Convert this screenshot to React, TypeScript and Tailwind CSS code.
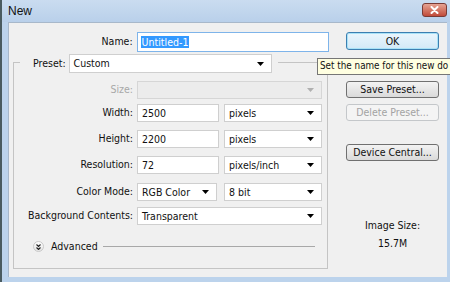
import React from "react";

const Arrow = ({ disabled }: { disabled?: boolean }) => (
  <svg width="7" height="4" viewBox="0 0 7 4" className="shrink-0">
    <path d="M0 0h7L3.5 4z" fill={disabled ? "#b0b0b0" : "#000"} />
  </svg>
);

const Select = ({ w, value, disabled }: { w: string; value?: string; disabled?: boolean }) => (
  <div
    className={`${w} h-[18px] flex items-center justify-between pl-[4px] pr-[7px] border ${
      disabled ? "bg-[#ececec] border-[#d6d6d6]" : "bg-white border-[#cfcfcf]"
    }`}
  >
    <span className="leading-none">{value}</span>
    <Arrow disabled={disabled} />
  </div>
);

const Input = ({ w, value }: { w: string; value: string }) => (
  <div className={`${w} h-[18px] flex items-center pl-[4px] bg-white border border-[#cfcfcf]`}>
    <span className="leading-none">{value}</span>
  </div>
);

const Btn = ({ label, disabled, def, h = "h-[17px]" }: { label: string; disabled?: boolean; def?: boolean; h?: string }) => (
  <div
    className={`w-[93px] ${h} flex items-center justify-center rounded-[3px] border ${
      disabled
        ? "border-[#c4c7ca] bg-[#f4f4f4] text-[#a3a3a3]"
        : def
        ? "border-[#3c7fb1] bg-gradient-to-b from-[#eaf6fd] to-[#d3e9f7] shadow-[inset_0_0_0_1px_#a9e2f7]"
        : "border-[#707070] bg-gradient-to-b from-[#f3f3f3] to-[#dadada]"
    }`}
  >
    <span className="leading-none">{label}</span>
  </div>
);

const Row = ({ label, children, mt, gray }: { label: string; children: React.ReactNode; mt: string; gray?: boolean }) => (
  <div className={`flex items-center ${mt}`}>
    <div className={`w-[119px] text-right ${gray ? "text-[#a8a8a8]" : ""}`}>{label}</div>
    <div className="ml-[4px] flex items-center">{children}</div>
  </div>
);

export default function App() {
  return (
    <div className="relative w-[450px] h-[282px] overflow-hidden bg-[#bcd3ec] font-['DejaVu_Sans_Condensed','DejaVu_Sans',sans-serif] text-[10.5px] text-[#111]">
      <div className="flex h-full">
        <div className="w-[2px] bg-[#4a5b60]" />
        <div className="flex flex-1 flex-col">
          <div className="h-[22px] flex items-center justify-between pl-[6px] pr-[3px] bg-gradient-to-b from-[#cadcf0] to-[#b9d0ea]">
            <span className="text-[12px] leading-none font-['Liberation_Sans',Arial,sans-serif]">New</span>
            <div className="w-[25px] h-[14px] mt-[-2px] rounded-[3px] border border-[#7a3b35] bg-gradient-to-b from-[#e5a393] to-[#c04a3a] flex items-center justify-center">
              <svg width="9" height="8" viewBox="0 0 9 8">
                <path d="M1.5 1l6 6M7.5 1l-6 6" stroke="#fff" strokeWidth="2" strokeLinecap="round" />
              </svg>
            </div>
          </div>
          <div className="flex flex-1 ml-[6px] mr-[3px] mb-[5px] bg-[#f0f0f0] border-t border-l border-[#a8b8ca] pt-[9px]">
            <div className="w-[320px] flex flex-col">
              <div className="flex items-center">
                <div className="w-[124px] text-right">Name:</div>
                <div className="ml-[4px] w-[193px] h-[20px] flex items-center pl-[3px] bg-white border border-[#7eb4ea]">
                  <span className="bg-[#3399ff] text-white leading-[12px] px-[1px]">Untitled-1</span>
                </div>
              </div>
              <div className="ml-[4px] w-[315px] mt-[2px] flex flex-col">
                <div className="flex h-[19px] items-stretch">
                  <div className="w-[7px] flex flex-col">
                    <div className="h-[8px]" />
                    <div className="flex-1 border-l border-t border-[#c4c4c4]" />
                  </div>
                  <div className="ml-[13px] flex items-center">Preset:</div>
                  <div className="ml-[3px] flex items-center">
                    <Select w="w-[203px] h-[19px]" value="Custom" />
                  </div>
                  <div className="ml-[6px] flex-1 flex flex-col">
                    <div className="h-[8px]" />
                    <div className="flex-1 border-r border-t border-[#c4c4c4]" />
                  </div>
                </div>
                <div className="h-[196px] border-l border-r border-b border-[#c4c4c4] flex flex-col">
                  <Row label="Size:" mt="mt-[8px]" gray>
                    <Select w="w-[185px]" disabled />
                  </Row>
                  <Row label="Width:" mt="mt-[5px]">
                    <Input w="w-[82px]" value="2500" />
                    <div className="ml-[5px]"><Select w="w-[98px]" value="pixels" /></div>
                  </Row>
                  <Row label="Height:" mt="mt-[8px]">
                    <Input w="w-[82px]" value="2200" />
                    <div className="ml-[5px]"><Select w="w-[98px]" value="pixels" /></div>
                  </Row>
                  <Row label="Resolution:" mt="mt-[8px]">
                    <Input w="w-[82px]" value="72" />
                    <div className="ml-[5px]"><Select w="w-[98px]" value="pixels/inch" /></div>
                  </Row>
                  <Row label="Color Mode:" mt="mt-[9px]">
                    <Select w="w-[80px]" value="RGB Color" />
                    <div className="ml-[7px]"><Select w="w-[98px]" value="8 bit" /></div>
                  </Row>
                  <Row label="Background Contents:" mt="mt-[6px]">
                    <Select w="w-[185px]" value="Transparent" />
                  </Row>
                  <div className="flex items-center mt-[14px] ml-[19px] mr-[12px]">
                    <div className="w-[11px] h-[11px] rounded-full border border-[#c9c9c9] bg-gradient-to-b from-[#ffffff] to-[#e4e4e4] flex items-center justify-center">
                      <svg width="5" height="6" viewBox="0 0 5 6">
                        <path d="M0.5 0.5l2 2 2-2M0.5 3.5l2 2 2-2" stroke="#222" strokeWidth="1.1" fill="none" />
                      </svg>
                    </div>
                    <span className="ml-[7px]">Advanced</span>
                    <div className="ml-[5px] flex-1 h-px bg-[#a8a8a8]" />
                  </div>
                </div>
              </div>
            </div>
            <div className="ml-[17px] w-[93px] flex flex-col items-center">
              <Btn label="OK" def h="h-[18px]" />
              <div className="mt-[31px]"><Btn label="Save Preset..." /></div>
              <div className="mt-[6px]"><Btn label="Delete Preset..." disabled /></div>
              <div className="mt-[23px]"><Btn label="Device Central..." /></div>
              <div className="mt-[58px] leading-[13px]">Image Size:</div>
              <div className="mt-[5px] leading-[13px]">15.7M</div>
            </div>
          </div>
        </div>
      </div>
      <div className="absolute left-[317px] top-[58px] right-0 h-[17px] border border-r-0 border-[#767676] bg-[#ffffe1] flex items-center pl-[2px] whitespace-nowrap overflow-hidden text-[9.8px]">
        Set the name for this new do
      </div>
    </div>
  );
}
